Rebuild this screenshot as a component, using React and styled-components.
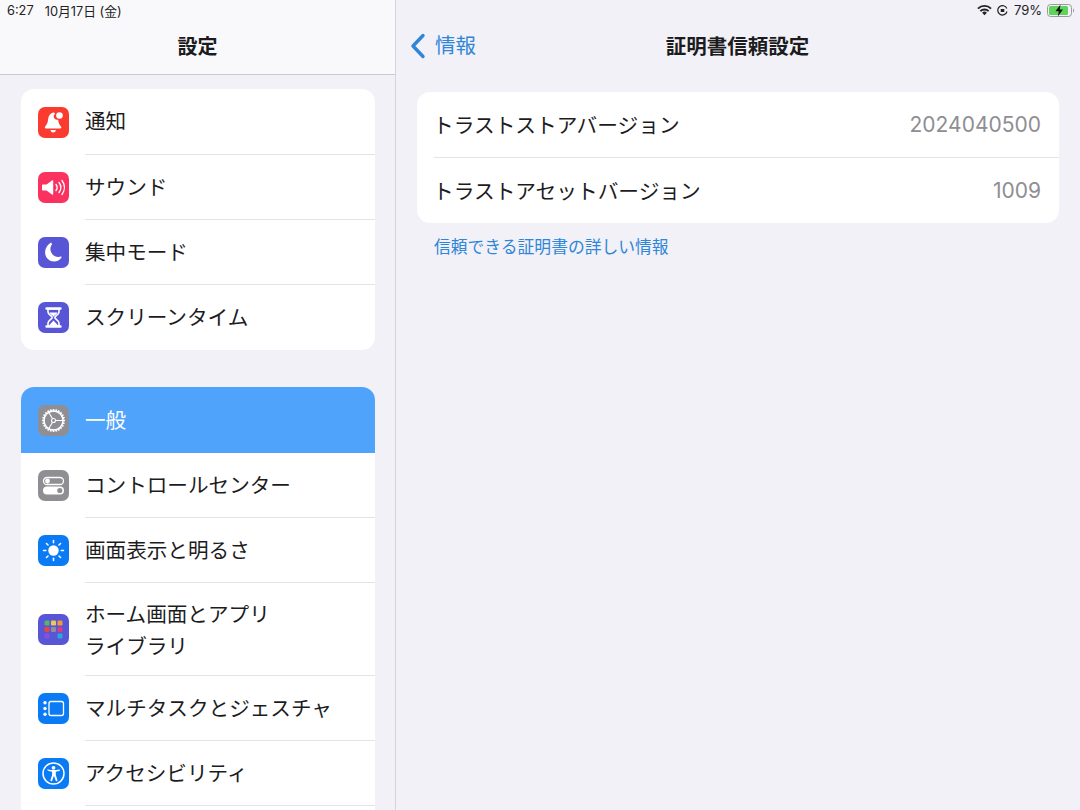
import React from "react";
import styled, { createGlobalStyle } from "styled-components";

const GlobalStyle = createGlobalStyle`
    html, body {
        margin: 0;
        height: 100%;
        overflow: hidden;
        background: #f1f1f7;
    }
    body {
        font-family: "Inter", "Noto Sans CJK JP", sans-serif;
        color: #1c1c1e;
    }
`;

const Page = styled.div`
    display: flex;
    width: 1080px;
    height: 810px;
    overflow: hidden;
`;

const Sidebar = styled.aside`
    flex: 0 0 395px;
    height: 810px;
    overflow: hidden;
    background: #f1f1f7;
    border-right: 1px solid #d4d4da;
`;

const SidebarHeader = styled.header`
    height: 74px;
    background: #f9f9fb;
    border-bottom: 1px solid #c9c9cf;
`;

const Main = styled.main`
    flex: 1;
    min-width: 0;
`;

const StatusBar = styled.div`
    display: flex;
    align-items: center;
    justify-content: ${(p) => (p.$right ? "flex-end" : "flex-start")};
    height: 20px;
    padding: 0 ${(p) => (p.$right ? "5px" : "7px")};
    font-size: 12.8px;
    color: #222;
`;

const DateText = styled.span`
    margin-left: 11px;
`;

const SidebarTitle = styled.h1`
    margin: 0;
    height: 54px;
    line-height: 55px;
    text-align: center;
    font-size: 20px;
    font-weight: 700;
`;

const Group = styled.section`
    margin: ${(p) => p.$top}px 20px 0 21px;
    background: #fff;
    border-radius: 13px;
    overflow: hidden;
`;

const Row = styled.div`
    display: flex;
    align-items: stretch;
    background: ${(p) => (p.$selected ? "#4fa3fb" : "transparent")};
    color: ${(p) => (p.$selected ? "#fff" : "#1c1c1e")};
`;

const IconBox = styled.div`
    align-self: center;
    flex: 0 0 31px;
    height: 31px;
    margin: 0 16px 0 17px;
    border-radius: 7px;
    background: ${(p) => p.$bg};
    display: flex;
    align-items: center;
    justify-content: center;
    & svg {
        display: block;
    }
`;

const RowLabel = styled.div`
    flex: 1;
    display: flex;
    align-items: center;
    box-sizing: border-box;
    min-height: ${(p) => (p.$first ? "66px" : "65px")};
    padding: ${(p) => (p.$tall ? "16px 0 12px" : "1px 0 0")};
    font-size: 20.6px;
    line-height: 32px;
    border-bottom: ${(p) => (p.$last ? "none" : "1px solid #e4e4e8")};
`;

const NavBar = styled.div`
    position: relative;
    display: flex;
    align-items: center;
    justify-content: center;
    height: 54px;
`;

const BackLink = styled.div`
    position: absolute;
    left: 14px;
    top: 12px;
    display: flex;
    align-items: center;
    gap: 9px;
    color: #2f86d8;
    font-size: 20.5px;
    line-height: 28px;
`;

const PageTitle = styled.h2`
    margin: -4px 0 0 -1px;
    font-size: 20.5px;
    font-weight: 700;
`;

const Card = styled.section`
    margin: 18px 21px 0 21px;
    padding-left: 17px;
    background: #fff;
    border-radius: 13px;
`;

const CardRow = styled.div`
    display: flex;
    align-items: center;
    justify-content: space-between;
    box-sizing: border-box;
    height: ${(p) => (p.$last ? "65px" : "66px")};
    padding-right: 18px;
    border-bottom: ${(p) => (p.$last ? "none" : "1px solid #e4e4e8")};
`;

const CardLabel = styled.span`
    margin: -2px 0 0 -1px;
    font-size: 20.7px;
`;

const CardValue = styled.span`
    color: #8e8e93;
    font-size: 21px;
`;

const FootLink = styled.div`
    margin: 12px 0 0 38px;
    color: #2f86d8;
    font-size: 16.8px;
    line-height: 24px;
`;

const StatusIcon = styled.svg`
    display: block;
    margin-right: ${(p) => p.$gap || 0}px;
`;

const Percent = styled.span`
    font-size: 13px;
    margin-right: 5px;
`;

const Bell = () => (
    <svg width="31" height="31" viewBox="0 0 31 31" fill="#fff">
        <path d="M15 5.500c1.200 0 2 .7 2.200 1.600-2.200 1.100-1.900 4.400.6 5.400 1 .4 1.800.4 2.400.2.200 3 1.200 5 2.800 6.800.8.900.3 2-.8 2H8c-1.100 0-1.600-1.100-.8-2 2-2.200 2.700-4.500 2.900-7.200.2-3.300 2-5.700 4.900-6.800z" />
        <circle cx="21.500" cy="8.500" r="3.300" />
        <path d="M12.600 23h5.200a2.600 2.400 0 0 1-5.200 0z" />
    </svg>
);

const Speaker = () => (
    <svg width="31" height="31" viewBox="0 0 31 31" fill="none" stroke="#fff" strokeWidth="1.400" strokeLinecap="round">
        <path fill="#fff" stroke="none" d="M5 12.500h3.500L14 8.500c.6-.4 1.200-.1 1.200.6v12.800c0 .7-.6 1-1.200.6l-5.500-4H5c-.6 0-1-.4-1-1v-4c0-.6.4-1 1-1z" />
        <path d="M18 12.500c1.400 1.800 1.400 4.200 0 6" />
        <path d="M21 10.500c2.300 3 2.300 7 0 10" />
        <path d="M24 8.500c3.100 4.200 3.100 9.800 0 14" />
    </svg>
);

const Moon = () => (
    <svg width="31" height="31" viewBox="0 0 31 31" fill="#fff">
        <path d="M13.500 6.500c.5 0 .7.500.4.900-1 1.300-1.500 2.900-1.500 4.600 0 4.400 3.600 8 8 8 1 0 1.700-.1 2.500-.4.500-.2.900.3.600.8-1.600 2.500-4.300 4.100-7.400 4.100-5 0-9-4-9-9 0-4.800 3.600-9.300 6.400-10z" />
    </svg>
);

const Hourglass = () => (
    <svg width="31" height="31" viewBox="0 0 31 31" fill="none" stroke="#fff">
        <path strokeWidth="2.400" strokeLinecap="round" d="M8.500 6.500h14M8.500 24.500h14" />
        <path strokeWidth="1.600" d="M10 7v3c0 2.500 4.200 3.900 4.200 5.500S10 18.500 10 21v3h11v-3c0-2.500-4.200-3.900-4.200-5.500S21 12.500 21 10V7z" />
        <path fill="#fff" stroke="none" d="M11.500 10.500h8c-.5 1.800-3.300 2.700-4 4.200-.7-1.500-3.500-2.400-4-4.200zM15.500 18.500l4.300 4.700h-8.600z" />
    </svg>
);

const Gear = () => {
    const teeth = Array.from({ length: 24 }, (_, i) => i * 15);
    return (
        <svg width="31" height="31" viewBox="0 0 31 31" fill="none" stroke="#fff">
            <circle cx="15.500" cy="15.500" r="9.500" strokeWidth="1.500" />
            {teeth.map((a) => (
                <line key={a} x1="15.500" y1="4" x2="15.500" y2="6.500" strokeWidth="1.700" transform={`rotate(${a} 15.500 15.500)`} />
            ))}
            <circle cx="15.500" cy="15.500" r="2" strokeWidth="1.100" />
            <path strokeWidth="1.100" d="M17.500 15.500H25M14.500 13.800 10.700 7.300M14.500 17.200l-3.800 6.500" />
        </svg>
    );
};

const Toggles = () => (
    <svg width="31" height="31" viewBox="0 0 31 31" fill="none">
        <rect x="5.500" y="7.500" width="20" height="7" rx="3.500" stroke="#fff" strokeWidth="1.300" />
        <circle cx="9.500" cy="11" r="2.400" fill="#fff" />
        <rect x="5" y="16.500" width="21" height="8" rx="4" fill="#fff" />
        <circle cx="21.800" cy="20.500" r="2.600" fill="#8e8e93" />
    </svg>
);

const Sun = () => {
    const rays = Array.from({ length: 8 }, (_, i) => i * 45);
    return (
        <svg width="31" height="31" viewBox="0 0 31 31" fill="#fff" stroke="#fff">
            <circle cx="15.500" cy="15.500" r="5.200" stroke="none" />
            {rays.map((a) => (
                <line key={a} x1="15.500" y1="5.500" x2="15.500" y2="7.800" strokeWidth="1.500" strokeLinecap="round" transform={`rotate(${a} 15.500 15.500)`} />
            ))}
        </svg>
    );
};

const gridColors = ["#55b56b", "#f1c84a", "#ef9a3c", "#e2483d", "#8e8ea0", "#e23a78", "#8b4fe0", "#5a58d0", "#2aa9d8"];

const AppGrid = () => (
    <svg width="31" height="31" viewBox="0 0 31 31">
        {gridColors.map((c, i) => (
            <rect key={c} x={6.500 + (i % 3) * 6.500} y={6.500 + Math.floor(i / 3) * 6.500} width="5" height="5" rx="1.200" fill={c} />
        ))}
    </svg>
);

const Multitask = () => (
    <svg width="31" height="31" viewBox="0 0 31 31" fill="none">
        <circle cx="7" cy="9.800" r="1.700" fill="#fff" />
        <circle cx="7" cy="15.500" r="1.700" fill="#fff" />
        <circle cx="7" cy="21.200" r="1.700" fill="#fff" />
        <rect x="11" y="8.500" width="14.500" height="14" rx="2" stroke="#fff" strokeWidth="1.300" />
    </svg>
);

const Access = () => (
    <svg width="31" height="31" viewBox="0 0 31 31" fill="none" stroke="#fff">
        <circle cx="15.500" cy="15.500" r="10.500" strokeWidth="1.500" />
        <circle cx="15.500" cy="9.800" r="1.900" fill="#fff" stroke="none" />
        <path fill="#fff" stroke="none" d="M9 12.300c-.1-.6.400-1 1-.9 3.600.8 7.400.8 11 0 .6-.1 1.100.3 1 .9-.1.400-.3.600-.7.700l-3.500.8v3.300l1.600 5c.2.600-.1 1-.6 1.100-.4.100-.8-.1-1-.5l-1.800-4.700h-.1l-1.800 4.700c-.2.400-.6.600-1 .5-.5-.1-.8-.5-.6-1.100l1.600-5v-3.300l-3.500-.8c-.4-.1-.6-.3-.6-.7z" />
    </svg>
);

const Chevron = () => (
    <svg width="16" height="26" viewBox="0 0 16 26" fill="none" stroke="#2f86d8" strokeWidth="3.400" strokeLinecap="round" strokeLinejoin="round">
        <path d="M13 2.500 3 13l10 10.500" />
    </svg>
);

const firstGroup = [
    { label: "通知", bg: "#fb3b30", icon: <Bell /> },
    { label: "サウンド", bg: "#fb3160", icon: <Speaker /> },
    { label: "集中モード", bg: "#5856d6", icon: <Moon /> },
    { label: "スクリーンタイム", bg: "#5856d6", icon: <Hourglass /> },
];

const secondGroup = [
    { label: "一般", bg: "#8e8e93", icon: <Gear />, selected: true },
    { label: "コントロールセンター", bg: "#8e8e93", icon: <Toggles /> },
    { label: "画面表示と明るさ", bg: "#0a7bf5", icon: <Sun /> },
    { label: "ホーム画面とアプリ\nライブラリ", bg: "#5856d6", icon: <AppGrid />, tall: true },
    { label: "マルチタスクとジェスチャ", bg: "#0a7bf5", icon: <Multitask /> },
    { label: "アクセシビリティ", bg: "#0a7bf5", icon: <Access /> },
];

const SettingsRow = ({ item, first, last }) => (
    <Row $selected={item.selected}>
        <IconBox $bg={item.bg}>{item.icon}</IconBox>
        <RowLabel $first={first} $tall={item.tall} $last={last || item.selected}>
            <span>
                {item.label.split("\n").map((line) => (
                    <div key={line}>{line}</div>
                ))}
            </span>
        </RowLabel>
    </Row>
);

const App = () => {
    return (
        <Page>
            <GlobalStyle />
            <Sidebar>
                <SidebarHeader>
                    <StatusBar>
                        6:27<DateText>10月17日 (金)</DateText>
                    </StatusBar>
                    <SidebarTitle>設定</SidebarTitle>
                </SidebarHeader>
                <Group $top={14}>
                    {firstGroup.map((item, i) => (
                        <SettingsRow key={item.label} item={item} first={i === 0} last={i === firstGroup.length - 1} />
                    ))}
                </Group>
                <Group $top={37}>
                    {secondGroup.map((item, i) => (
                        <SettingsRow key={item.label} item={item} first={i === 0} />
                    ))}
                    <Row>
                        <RowLabel $last />
                    </Row>
                </Group>
            </Sidebar>
            <Main>
                <StatusBar $right>
                    <StatusIcon $gap={5} width="15" height="12" viewBox="0 0 16 12" fill="none" stroke="#222" strokeWidth="2" strokeLinecap="butt">
                        <path d="M1 4.500a10 10 0 0 1 14 0" />
                        <path d="M3.600 7.200a6.300 6.300 0 0 1 8.800 0" />
                        <path fill="#222" stroke="none" d="M8 11.500 5.500 8.900a3.500 3.500 0 0 1 5 0z" />
                    </StatusIcon>
                    <StatusIcon $gap={6} width="11" height="11" viewBox="0 0 11 11" fill="none" stroke="#222">
                        <path strokeWidth="1.200" d="M9.800 3.500A4.700 4.700 0 1 0 10 6.500" />
                        <rect x="3.700" y="4" width="3.600" height="3" rx=".5" fill="#222" stroke="none" />
                    </StatusIcon>
                    <Percent>79%</Percent>
                    <StatusIcon width="28" height="13" viewBox="0 0 28 13" fill="none">
                        <rect x=".5" y=".5" width="24" height="12" rx="3" stroke="#9a9a9a" />
                        <rect x="2" y="2" width="19" height="9" rx="1.500" fill="#5fd45a" />
                        <path d="M26 4.500c1.300.3 1.300 3.700 0 4z" fill="#9a9a9a" />
                        <path d="M13.500 .5 8.500 7.300h3.300L10.800 12.500l5.200-7h-3.300z" fill="#111" />
                    </StatusIcon>
                </StatusBar>
                <NavBar>
                    <BackLink>
                        <Chevron />
                        情報
                    </BackLink>
                    <PageTitle>証明書信頼設定</PageTitle>
                </NavBar>
                <Card>
                    <CardRow>
                        <CardLabel>トラストストアバージョン</CardLabel>
                        <CardValue>2024040500</CardValue>
                    </CardRow>
                    <CardRow $last>
                        <CardLabel>トラストアセットバージョン</CardLabel>
                        <CardValue>1009</CardValue>
                    </CardRow>
                </Card>
                <FootLink>信頼できる証明書の詳しい情報</FootLink>
            </Main>
        </Page>
    );
};

export default App;
